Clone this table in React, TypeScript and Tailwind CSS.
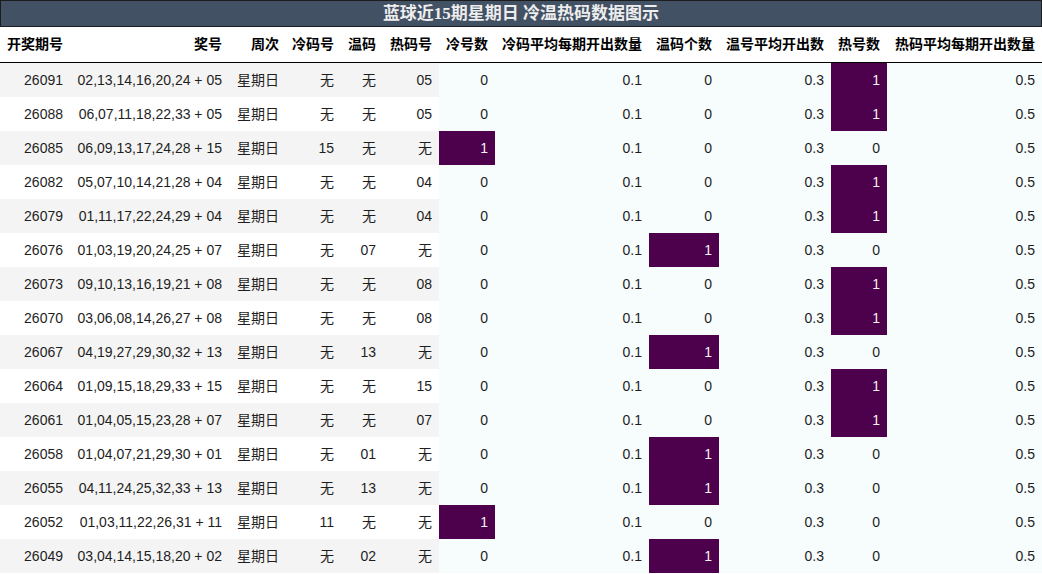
const headers = [
  '开奖期号',
  '奖号',
  '周次',
  '冷码号',
  '温码',
  '热码号',
  '冷号数',
  '冷码平均每期开出数量',
  '温码个数',
  '温号平均开出数',
  '热号数',
  '热码平均每期开出数量',
]

type Row = [string, string, string, string, string, number, number, number]

// issue, draw, cold, warm, hot, coldCount, warmCount, hotCount
const rows: Row[] = [
  ['26091', '02,13,14,16,20,24 + 05', '无', '无', '05', 0, 0, 1],
  ['26088', '06,07,11,18,22,33 + 05', '无', '无', '05', 0, 0, 1],
  ['26085', '06,09,13,17,24,28 + 15', '15', '无', '无', 1, 0, 0],
  ['26082', '05,07,10,14,21,28 + 04', '无', '无', '04', 0, 0, 1],
  ['26079', '01,11,17,22,24,29 + 04', '无', '无', '04', 0, 0, 1],
  ['26076', '01,03,19,20,24,25 + 07', '无', '07', '无', 0, 1, 0],
  ['26073', '09,10,13,16,19,21 + 08', '无', '无', '08', 0, 0, 1],
  ['26070', '03,06,08,14,26,27 + 08', '无', '无', '08', 0, 0, 1],
  ['26067', '04,19,27,29,30,32 + 13', '无', '13', '无', 0, 1, 0],
  ['26064', '01,09,15,18,29,33 + 15', '无', '无', '15', 0, 0, 1],
  ['26061', '01,04,05,15,23,28 + 07', '无', '无', '07', 0, 0, 1],
  ['26058', '01,04,07,21,29,30 + 01', '无', '01', '无', 0, 1, 0],
  ['26055', '04,11,24,25,32,33 + 13', '无', '13', '无', 0, 1, 0],
  ['26052', '01,03,11,22,26,31 + 11', '11', '无', '无', 1, 0, 0],
  ['26049', '03,04,14,15,18,20 + 02', '无', '02', '无', 0, 1, 0],
]

const grid =
  'grid grid-cols-[70px_159px_57px_55px_42px_56px_56px_154px_70px_112px_56px_155px]'

function PlainCell({ children, striped }: { children: React.ReactNode; striped: boolean }) {
  return (
    <div
      className={`flex h-[34px] items-center justify-end pr-[7px] ${
        striped ? 'bg-[#f4f4f4]' : 'bg-white'
      }`}
    >
      {children}
    </div>
  )
}

function HeatCell({ value }: { value: number | string }) {
  const hot = value === 1
  return (
    <div
      className={`flex h-[34px] items-center justify-end pr-[7px] ${
        hot ? 'bg-[#4d004b] text-[#f2f2f2]' : 'bg-[#f7fcfd]'
      }`}
    >
      {value}
    </div>
  )
}

export default function App() {
  return (
    <div
      className="w-[1042px] h-[574px] overflow-hidden bg-white text-[14px] text-[#1e1e1e]"
      style={{ fontFamily: '"Liberation Sans", "Noto Sans CJK SC", sans-serif' }}
    >
      <div
        className="flex h-[27px] items-center justify-center border border-[#1c1c1c] bg-[#435165] text-[17px] font-bold text-[#ededed]"
        style={{ fontFamily: '"Liberation Serif", "Noto Sans CJK SC", serif' }}
      >
        蓝球近15期星期日 冷温热码数据图示
      </div>

      <div className={`${grid} h-[36px] border-b border-black font-bold text-black`}>
        {headers.map((h) => (
          <div key={h} className="flex items-center justify-end pr-[7px]">
            {h}
          </div>
        ))}
      </div>

      {rows.map((r, i) => {
        const striped = i % 2 === 0
        return (
          <div key={r[0]} className={grid}>
            <PlainCell striped={striped}>{r[0]}</PlainCell>
            <PlainCell striped={striped}>{r[1]}</PlainCell>
            <PlainCell striped={striped}>星期日</PlainCell>
            <PlainCell striped={striped}>{r[2]}</PlainCell>
            <PlainCell striped={striped}>{r[3]}</PlainCell>
            <PlainCell striped={striped}>{r[4]}</PlainCell>
            <HeatCell value={r[5]} />
            <HeatCell value="0.1" />
            <HeatCell value={r[6]} />
            <HeatCell value="0.3" />
            <HeatCell value={r[7]} />
            <HeatCell value="0.5" />
          </div>
        )
      })}
    </div>
  )
}
